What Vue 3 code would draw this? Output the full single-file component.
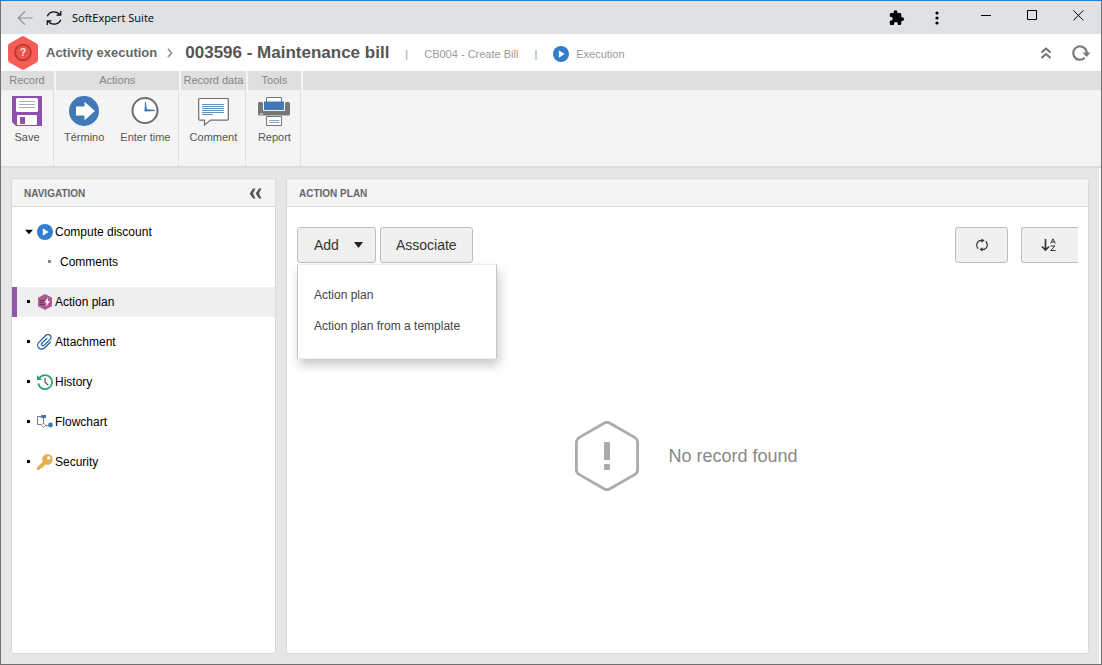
<script setup>
import { ref } from 'vue'

const groups = [
  { name: 'Record', items: [{ id: 'save', label: 'Save' }] },
  { name: 'Actions', items: [{ id: 'finish', label: 'Término' }, { id: 'time', label: 'Enter time' }] },
  { name: 'Record data', items: [{ id: 'comment', label: 'Comment' }] },
  { name: 'Tools', items: [{ id: 'report', label: 'Report' }] },
]

const nav = [
  { id: 'compute', label: 'Compute discount', children: ['Comments'] },
  { id: 'plan', label: 'Action plan' },
  { id: 'attachment', label: 'Attachment' },
  { id: 'history', label: 'History' },
  { id: 'flowchart', label: 'Flowchart' },
  { id: 'security', label: 'Security' },
]

const active = ref('plan')
const menuOpen = ref(true)
</script>

<template>
  <div class="window">
    <header class="titlebar">
      <button class="plain" aria-label="Back">
        <svg width="16" height="16" viewBox="0 0 16 16" fill="none" stroke="#8b8d91" stroke-width="1.2"><path d="M15.500 8H1M8 1.300 1.300 8 8 14.700" /></svg>
      </button>
      <button class="plain reload" aria-label="Reload">
        <svg width="16" height="16" viewBox="0 0 16 16" fill="none" stroke="#111" stroke-width="1.300"><path d="M1.300 6.300A7 6.600 0 0 1 13.800 4.800M14.700 1v4.200H10.500M14.700 9.700A7 6.600 0 0 1 2.200 11.200M1.300 15v-4.200H5.500" /></svg>
      </button>
      <span class="app-name">SoftExpert Suite</span>
      <div class="window-tools">
        <button class="plain" aria-label="Extensions">
          <svg width="16" height="16" viewBox="0 0 16 16"><path fill="#000" d="M13.200 7.200h-.9V4.500c0-.8-.7-1.500-1.500-1.500H8.400v-.9a1.900 1.900 0 0 0-3.800 0V3H2.200C1.400 3 .8 3.700.8 4.500v2.300h.9a2 2 0 0 1 0 4H.8v2.700c0 .8.6 1.500 1.400 1.500h2.700v-.9a2 2 0 0 1 4 0v.9h1.900c.8 0 1.500-.7 1.500-1.500V11h.9a1.900 1.900 0 0 0 0-3.800z" /></svg>
        </button>
        <button class="plain" aria-label="Menu">
          <svg width="4" height="14" viewBox="0 0 4 14"><circle cx="2" cy="2" r="1.600" /><circle cx="2" cy="7" r="1.600" /><circle cx="2" cy="12" r="1.600" /></svg>
        </button>
      </div>
      <div class="window-controls">
        <button class="plain" aria-label="Minimize">
          <svg width="11" height="11" viewBox="0 0 11 11"><path d="M0 5h10v1H0z" /></svg>
        </button>
        <button class="plain" aria-label="Maximize">
          <svg width="11" height="11" viewBox="0 0 11 11" fill="none" stroke="#000"><path d="M.5.5h9v9h-9z" /></svg>
        </button>
        <button class="plain" aria-label="Close">
          <svg width="11" height="11" viewBox="0 0 11 11" fill="none" stroke="#000"><path d="m.4.4 10 10m0-10-10 10" /></svg>
        </button>
      </div>
    </header>

    <div class="crumbs">
      <svg class="logo" width="30" height="34" viewBox="0 0 30 34">
        <path fill="#f75c57" d="M13.700.6a2.600 2.600 0 0 1 2.600 0l12.300 7A2.600 2.600 0 0 1 30 9.900v14.200a2.600 2.600 0 0 1-1.400 2.300l-12.300 7a2.600 2.600 0 0 1-2.600 0l-12.300-7A2.600 2.600 0 0 1 0 24.100V9.900a2.600 2.600 0 0 1 1.400-2.300z" />
        <circle cx="15" cy="16.500" r="7.900" fill="#e9544d" stroke="#b9382f" stroke-width="1.600" />
        <text x="15" y="20" text-anchor="middle" font-family="Liberation Sans, Arial, sans-serif" font-size="10" font-weight="bold" fill="#ffe3e0">?</text>
      </svg>
      <span class="section">Activity execution</span>
      <svg class="chevron" width="6" height="10" viewBox="0 0 6 10" fill="none" stroke="#999" stroke-width="1.800"><path d="M1 .8 4.500 5 1 9.200" /></svg>
      <h1>003596 - Maintenance bill</h1>
      <span class="meta bar">|</span>
      <span class="meta">CB004 - Create Bill</span>
      <span class="meta bar">|</span>
      <svg class="play" width="16" height="16" viewBox="0 0 16 16"><circle cx="8" cy="8" r="8" fill="#2f7dcb" /><path fill="#fff" d="M5.800 4.300 11.600 8l-5.800 3.700z" /></svg>
      <span class="meta">Execution</span>
      <div class="crumb-actions">
        <button class="plain" aria-label="Collapse ribbon">
          <svg width="10" height="12" viewBox="0 0 10 12" fill="none" stroke="#757575" stroke-width="2"><path d="M.5 5.500 5 1.500l4.500 4M.5 11 5 7l4.500 4" /></svg>
        </button>
        <button class="plain" aria-label="Refresh">
          <svg width="19" height="16" viewBox="0 0 19 16"><path fill="none" stroke="#7b7b7b" stroke-width="2.200" d="M12.700 12.800A6.700 6.700 0 1 1 14.700 8" /><path fill="#7b7b7b" d="M10.500 7.500H18.500L14.600 12z" /></svg>
        </button>
      </div>
    </div>

    <div class="ribbon">
      <section v-for="g in groups" :key="g.name" class="group">
        <h2>{{ g.name }}</h2>
        <div class="group-items">
          <button v-for="i in g.items" :key="i.id" class="plain tool">
            <svg v-if="i.id === 'save'" width="32" height="30" viewBox="0 0 32 30">
              <path fill="#8e50ad" d="M1 0h30v30H5l-4-4z" />
              <rect x="5" y="2" width="22" height="14" rx="1.500" fill="#fff" />
              <path stroke="#aaa" d="M8 5.500h16M8 8.500h16M8 11.500h16" />
              <rect x="6" y="19" width="20" height="10" rx="1" fill="#fff" />
              <path fill="#8e50ad" d="M9 21h5v7H9z" />
            </svg>
            <svg v-else-if="i.id === 'finish'" width="32" height="30" viewBox="0 0 32 30">
              <circle cx="16" cy="15" r="15" fill="#4178b5" />
              <path fill="#fff" d="M8 10.500h8.500V5.700L27 15 16.500 24.300v-4.800H8z" />
            </svg>
            <svg v-else-if="i.id === 'time'" width="32" height="30" viewBox="0 0 32 30">
              <circle cx="16" cy="14.500" r="12.500" fill="#fff" stroke="#6d6d6d" stroke-width="2" />
              <path fill="#3674b5" d="M16 6h.8l1 7.200 8.200.9v.8l-10.500.7z" />
            </svg>
            <svg v-else-if="i.id === 'comment'" width="32" height="30" viewBox="0 0 32 30">
              <path fill="#fff" stroke="#6d6d6d" stroke-width="1.200" d="M2.500 2.500h28a.8.8 0 0 1 .8.8v20a.8.8 0 0 1-.8.800H13.500L7.500 29v-4.900h-5a.8.8 0 0 1-.8-.8v-20a.8.8 0 0 1 .8-.8z" />
              <path stroke="#5f93c8" d="M5 8.500h22M5 10.500h22M5 12.500h22M5 14.500h22M5 16.500h22M5 18.500h11" />
            </svg>
            <svg v-else width="32" height="30" viewBox="0 0 32 30">
              <path fill="#777" d="M1.500 6H4l3 3h18l3-3h2.500A1.500 1.500 0 0 1 32 7.500v10.500a1.500 1.500 0 0 1-1.500 1.500h-29A1.500 1.500 0 0 1 0 18V7.500A1.500 1.500 0 0 1 1.500 6z" />
              <path fill="#fff" stroke="#777" d="M8.500 1.500h15v5h-15z" />
              <path fill="#4178b5" d="M6 5.500h20V14H6z" />
              <path fill="none" stroke="#f4f4f4" d="M5.500 5v9.500h21V5" />
              <path fill="#fff" d="M2 17.500h3v1H2z" />
              <path fill="#fff" stroke="#777" d="M8.500 20.500h15v9h-15z" />
              <path stroke="#7fa9d4" d="M11 24.500h10M11 26.500h10" />
            </svg>
            <span>{{ i.label }}</span>
          </button>
        </div>
      </section>
      <div class="group filler"><div class="filler-head"></div></div>
    </div>

    <main>
      <aside class="panel">
        <div class="panel-head">
          <h2>NAVIGATION</h2>
          <button class="plain" aria-label="Collapse navigation">
            <svg width="14" height="11" viewBox="0 0 14 11" fill="#555"><path d="M4 .5h2.500L4 5.500l2.500 5H4L.7 5.500zM10 .5h2.500L10 5.500l2.500 5H10L6.700 5.500z" /></svg>
          </button>
        </div>
        <ul class="nav">
          <li v-for="n in nav" :key="n.id">
            <a href="#" :class="{ active: active === n.id }" @click.prevent="active = n.id">
              <svg v-if="n.children" class="marker" width="10" height="6" viewBox="0 0 10 6"><path d="M1 .7h8L5 5.300z" /></svg>
              <svg v-else class="marker" width="10" height="6" viewBox="0 0 10 6"><path d="M3 1h3v3H3z" /></svg>
              <svg v-if="n.id === 'compute'" width="16" height="16" viewBox="0 0 16 16"><circle cx="8" cy="8" r="8" fill="#2f7dcb" /><path fill="#fff" d="M5.800 4.300 11.600 8l-5.800 3.700z" /></svg>
              <svg v-else-if="n.id === 'plan'" width="16" height="16" viewBox="0 0 16 16">
                <path fill="#ab5b92" d="m8 0 7 3.800v8.400L8 16l-7-3.800V3.800z" />
                <path stroke="#6e3160" d="M3 6.500h5M3 8.500h4M3 10.500h5" />
                <path fill="#fff" d="M10.800 3.500 7.800 8.600h2L9 12.500l4-5.200h-2.200z" />
              </svg>
              <svg v-else-if="n.id === 'attachment'" width="16" height="16" viewBox="0 0 16 16" fill="none" stroke="#1f5a9e" stroke-width="1.200" stroke-linecap="round">
                <path transform="translate(8.300 7.700) rotate(-45)" d="M3.500-1.300h-7a1.500 1.500 0 0 0 0 3H5a2.900 2.900 0 0 0 0-5.800H-5a4 4 0 0 0 0 8H3.500" />
              </svg>
              <svg v-else-if="n.id === 'history'" width="16" height="16" viewBox="0 0 16 16" fill="none">
                <path stroke="#30a27c" stroke-width="1.800" d="M2.400 4A7 7 0 1 1 1.200 9.500" />
                <path fill="#30a27c" d="M0 1v5h5.200z" />
                <path stroke="#555" stroke-width="1.200" d="M8 3.700v4.600l3.300 3" />
              </svg>
              <svg v-else-if="n.id === 'flowchart'" width="16" height="16" viewBox="0 0 16 16" fill="none">
                <path stroke="#777" d="M5 2.500H.5v8H4M6.500 4v6M8.500 11.500H12" />
                <path fill="#4178b5" d="M4 1h5v3H4z" />
                <path fill="#fff" stroke="#888" d="m6.500 9 2.300 2.300-2.300 2.300-2.300-2.300z" />
                <circle cx="13.500" cy="11" r="2.400" fill="#4178b5" />
              </svg>
              <svg v-else width="16" height="16" viewBox="0 0 16 16">
                <path fill="#e8ae54" fill-rule="evenodd" d="M10.500 0a5.400 5.400 0 1 1-1.600 10.600L7.500 11.300l-.3 1.200-1.500.2-.2 1.300-1.700.3L2.300 16H0v-2.600l5.700-5.700A5.400 5.400 0 0 1 10.500 0zm1.200 2.200a1.700 1.700 0 1 0 0 3.400 1.700 1.700 0 0 0 0-3.400z" />
              </svg>
              <span>{{ n.label }}</span>
            </a>
            <ul v-if="n.children">
              <li v-for="c in n.children" :key="c"><a href="#" class="child" @click.prevent>{{ c }}</a></li>
            </ul>
          </li>
        </ul>
      </aside>

      <section class="panel content">
        <div class="panel-head"><h2>ACTION PLAN</h2></div>
        <div class="toolbar">
          <div class="dropdown">
            <button class="btn add" :aria-expanded="menuOpen" @click="menuOpen = !menuOpen">
              Add
              <svg width="9" height="6" viewBox="0 0 9 6"><path fill="#222" d="M0 0h9L4.500 6z" /></svg>
            </button>
            <div v-if="menuOpen" class="menu">
              <a href="#" @click.prevent>Action plan</a>
              <a href="#" @click.prevent>Action plan from a template</a>
            </div>
          </div>
          <button class="btn">Associate</button>
          <div class="toolbar-end">
            <button class="btn icon" aria-label="Refresh list">
              <svg width="14" height="14" viewBox="0 0 14 14" fill="none" stroke="#333" stroke-width="1.200"><path d="M3.300 10.800A5 5 0 0 1 4.500 2.600H8M10.700 3.200A5 5 0 0 1 9.500 11.400H6" /><path fill="#333" stroke="none" d="M6.500.4 9.500 2.600 6.500 4.800zM7.500 9.200v4.400l-3-2.200z" /></svg>
            </button>
            <button class="btn icon sort" aria-label="Sort A to Z">
              <svg width="15" height="14" viewBox="0 0 15 14" fill="none" stroke="#333"><path stroke-width="1.600" d="M4.500 1v10M1 8.500 4.500 12 8 8.500" /><path d="M9.700 5.500 12 .8l2.300 4.700M10.500 4h3M9.500 8h4.500l-4.300 4.500h4.800" /></svg>
            </button>
          </div>
        </div>
        <div class="empty">
          <svg width="64" height="70" viewBox="0 0 64 70">
            <path fill="none" stroke="#ababab" stroke-width="2.800" d="M29 2.200a6 6 0 0 1 6 0l24.600 14.200a6 6 0 0 1 3 5.200v26.800a6 6 0 0 1-3 5.200L35 67.800a6 6 0 0 1-6 0L4.400 53.600a6 6 0 0 1-3-5.200V21.600a6 6 0 0 1 3-5.200z" />
            <rect x="29" y="21" width="6" height="18" rx="1" fill="#ababab" />
            <rect x="29" y="43" width="6" height="6" rx="1" fill="#ababab" />
          </svg>
          <p>No record found</p>
        </div>
      </section>
    </main>
  </div>
</template>

<style>
body { margin: 0; }
</style>

<style scoped>
* { box-sizing: border-box; }
.window {
  min-height: 100vh;
  display: flex;
  flex-direction: column;
  border: 1px solid #707070;
  border-top-color: #1883d7;
  background: #f4f4f4;
  font-family: "Liberation Sans", Arial, sans-serif;
  font-size: 12px;
  color: #000;
}
h1, h2, p, ul { margin: 0; padding: 0; }
ul { list-style: none; }
a { color: inherit; text-decoration: none; }
svg { display: block; flex: none; }
.plain { border: 0; padding: 0; background: none; font: inherit; color: inherit; }

.titlebar {
  height: 33px;
  display: flex;
  align-items: center;
  padding-left: 16px;
  background: #dee1e6;
}
.reload { margin-left: 13px; }
.app-name { margin-left: 10px; font-family: "Open Sans", "Noto Sans", sans-serif; font-size: 11px; }
.window-tools { display: flex; align-items: center; gap: 30px; margin-left: auto; }
.window-controls { display: flex; gap: 35px; margin: 0 17px 4px 42px; }

.crumbs {
  height: 37px;
  display: flex;
  align-items: center;
  padding: 0 10px 0 7px;
  background: #fff;
}
.section { margin-left: 8px; font-size: 13px; line-height: 16px; font-weight: bold; color: #666; }
.chevron { margin: 0 12px 0 10px; }
h1 { font-size: 17px; line-height: 20px; color: #555; }
.meta { font-size: 11px; line-height: 14px; margin-top: 2px; color: #9a9a9a; }
.bar { margin-left: 16px; margin-right: 16px; }
.play { margin: 2px 7px 0 0; }
.crumb-actions { display: flex; align-items: center; gap: 21px; margin-left: auto; }

.ribbon {
  display: flex;
  gap: 2px;
  height: 97px;
  border-bottom: 2px solid #dcdcdc;
}
.group { min-width: 53px; border-right: 1px solid #dfdfdf; }
.group h2, .filler-head {
  height: 19px;
  padding: 0 2px;
  background: #dfdfdf;
  font-size: 11px;
  line-height: 18px;
  font-weight: normal;
  text-align: center;
  color: #858585;
}
.group-items { display: flex; justify-content: center; gap: 2px; padding: 6px 1px 0; }
.tool {
  display: flex;
  flex-direction: column;
  align-items: center;
  gap: 4px;
  padding: 0 7px;
  font-size: 11px;
  line-height: 14px;
  color: #555;
}
.filler { flex: 1; border-right: 0; }

main {
  flex: 1;
  display: flex;
  gap: 10px;
  padding: 10px;
  border-right: 2px solid #f8f8f8;
  background: #e6e6e6;
}
.panel {
  display: flex;
  flex-direction: column;
  border: 1px solid #dadada;
  border-radius: 3px;
  background: #fff;
}
aside.panel { flex: 0 0 265px; }
.content { flex: 1; }
.panel-head {
  height: 28px;
  display: flex;
  align-items: center;
  justify-content: space-between;
  padding: 2px 12px 0;
  border-bottom: 1px solid #dadada;
  border-radius: 3px 3px 0 0;
  background: #f4f4f4;
}
.panel-head h2 { font-size: 10px; line-height: 12px; color: #666; }

.nav { display: flex; flex-direction: column; gap: 10px; padding: 10px 0; }
.nav a {
  display: flex;
  align-items: center;
  height: 30px;
  padding: 0 0 1px 7px;
  border-left: 5px solid transparent;
}
.nav a span { padding-left: 2px; }
.nav a.active { background: #efefef; border-left-color: #9057a9; }
.marker { margin-right: 3px; }
.nav a.child { gap: 9px; padding-left: 31px; }
.child::before { content: ""; width: 3px; height: 3px; background: #888; }

.toolbar { display: flex; gap: 4px; padding: 20px 10px 0; }
.dropdown { position: relative; }
.btn {
  display: flex;
  align-items: center;
  justify-content: center;
  height: 36px;
  padding: 0 15px;
  border: 1px solid #bebebe;
  border-radius: 3px;
  background: #f0f0f0;
  font: 14px/18px "Liberation Sans", Arial, sans-serif;
  color: #333;
}
.add { gap: 15px; padding: 0 12px 0 16px; }
.menu {
  position: absolute;
  z-index: 1;
  top: 37px;
  left: 0;
  width: 200px;
  padding: 15px 0 16px;
  border: 1px solid #c4c4c4;
  border-top-color: #eee;
  border-bottom-color: #eee;
  background: #fff;
  box-shadow: 2px 6px 10px rgba(0, 0, 0, 0.22);
}
.menu a { display: block; padding: 0 16px; line-height: 31px; color: #444; }
.toolbar-end { display: flex; gap: 13px; margin-left: auto; }
.icon { width: 53px; padding: 0; }
.sort { width: 57px; padding-right: 4px; border-right: 0; border-radius: 3px 0 0 3px; }

.empty {
  flex: 1;
  display: flex;
  align-items: center;
  justify-content: center;
  gap: 29px;
  padding: 0 2px 5px 0;
}
.empty p { font-size: 18px; line-height: 22px; color: #888; }
</style>
